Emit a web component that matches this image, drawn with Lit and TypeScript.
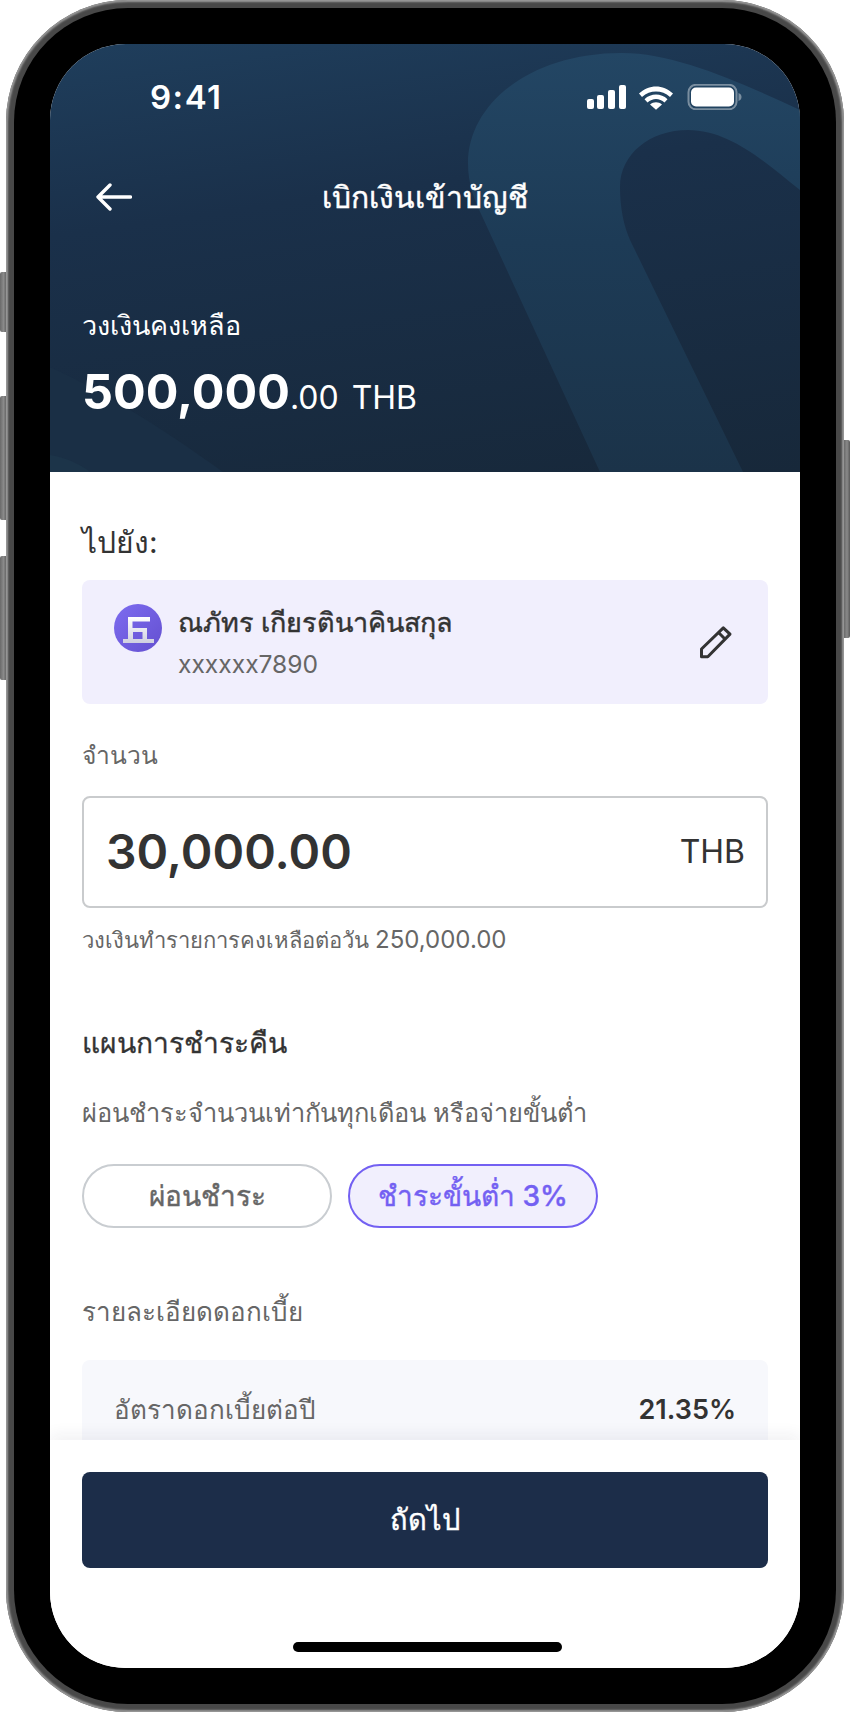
import { LitElement, html, css, svg } from "lit";
import { customElement } from "lit/decorators.js";

@customElement("app-root")
export class AppRoot extends LitElement {
  static styles = css`
    :host { display: block; width: 850px; height: 1712px; position: relative; overflow: hidden; background: #fff;
      font-family: Inter, "Noto Sans", "DejaVu Sans", sans-serif; color: #333; }
    * { box-sizing: border-box; }
    .hw { position: absolute; background: linear-gradient(90deg, #6a6a6a, #8a8a8a 50%, #5a5a5a); }
    .hw.l { left: 0; width: 7px; border-radius: 2px 0 0 2px; }
    .hw.r { right: 0; width: 6px; top: 440px; height: 198px; border-radius: 0 2px 2px 0; }
    .hw.a { top: 272px; height: 60px; }
    .hw.b { top: 396px; height: 124px; }
    .hw.c { top: 556px; height: 124px; }
    .device { position: absolute; left: 6px; top: 0; width: 838px; height: 1712px; border-radius: 122px;
      background: #484848; box-shadow: inset 0 0 2px 2px #9a9a9a; padding: 8px; }
    .bezel { width: 100%; height: 100%; background: #000; border-radius: 114px; padding: 36px; }
    .screen { width: 750px; height: 1624px; border-radius: 76px; overflow: hidden; background: #fff;
      display: flex; flex-direction: column; position: relative; }
    .header { height: 428px; flex: none; position: relative; color: #fff; overflow: hidden;
      background: linear-gradient(172deg, #1f3e5c 0%, #1a304a 36%, #17283a 100%); }
    .art { position: absolute; inset: 0; width: 750px; height: 428px; }
    .head-in { position: relative; display: flex; flex-direction: column; }
    .status { height: 106px; display: flex; align-items: center; justify-content: space-between; padding: 0 58px 0 100px; }
    .time { font-size: 33px; font-weight: 600; line-height: 40px; letter-spacing: 1.500px; }
    .sicons { display: flex; align-items: center; }
    .nav { height: 94px; display: flex; align-items: center; justify-content: center; position: relative; }
    .back { position: absolute; left: 46px; top: 33px; width: 36px; height: 28px; }
    .title { font-size: 30px; font-weight: 500; line-height: 40px; -webkit-text-stroke: 0.4px #fff; }
    .bal-label { font-size: 27px; line-height: 36px; margin: 64px 0 0 32px; }
    .bal { margin: 18px 0 0 32px; line-height: 60px; font-size: 32px; font-weight: 400; display: flex; align-items: baseline; }
    .bal b { font-size: 48.5px; font-weight: 700; }
    .bal .thb { margin-left: 13px; }
    .body { flex: 1; overflow: hidden; padding: 50px 32px 0; display: flex; flex-direction: column; }
    .h-to { font-size: 30px; line-height: 40px; color: #333; }
    .acct { margin-top: 18px; height: 124px; flex: none; background: #f1effd; border-radius: 8px; display: flex; align-items: center; padding: 0 34px 0 32px; }
    .avatar { width: 48px; height: 48px; margin-top: -29px; flex: none; }
    .acct-t { flex: 1; margin-left: 16px; padding-top: 2px; }
    .name { font-size: 27px; line-height: 36px; font-weight: 500; color: #333; -webkit-text-stroke: 0.45px #333; }
    .num { font-size: 24.600px; line-height: 36px; color: #666; margin-top: 5px; }
    .label { font-size: 24.600px; line-height: 36px; color: #666; margin-top: 33px; }
    .input { margin-top: 23px; height: 112px; flex: none; border: 2px solid #c9cbcd; border-radius: 8px; display: flex; align-items: center; justify-content: space-between; padding: 0 21px 0 22px; }
    .val { font-size: 48px; font-weight: 600; color: #333; line-height: 60px; }
    .cur { font-size: 32px; color: #333; font-weight: 400; line-height: 40px; }
    .hint { font-size: 24px; line-height: 34px; color: #666; margin-top: 15px; display: flex; align-items: baseline; }
    .hint .th { font-size: 22px; margin-right: 6px; }
    .h-plan { font-size: 28.200px; line-height: 40px; font-weight: 400; color: #333; margin-top: 66px; -webkit-text-stroke: 0.3px #333; }
    .sub { font-size: 25.400px; line-height: 36px; color: #666; margin-top: 32px; }
    .pills { display: flex; gap: 16px; margin-top: 33px; flex: none; }
    .pill { width: 250px; height: 64px; border-radius: 32px; border: 2px solid #c9cdd1; display: flex; align-items: center; justify-content: center; font-size: 28px; font-weight: 500; color: #666; background: #fff; -webkit-text-stroke: 0.4px #666; }
    .pill.on { border-color: #7360f2; color: #7360f2; background: #f1effd; -webkit-text-stroke: 0.4px #7360f2; }
    .h-det { font-size: 26px; line-height: 36px; color: #666; margin-top: 66px; }
    .det { margin-top: 30px; background: #f7f8fc; border-radius: 8px 8px 0 0; padding: 32px; flex: none; display: flex; justify-content: space-between; align-items: center; }
    .det span { font-size: 26px; line-height: 36px; color: #666; }
    .det b { font-size: 27px; line-height: 36px; font-weight: 600; color: #333; }
    .footer { height: 228px; flex: none; background: #fff; position: relative; padding: 32px 32px 0; box-shadow: 0 -6px 14px rgba(40, 40, 70, 0.06); }
    .cta { height: 96px; background: #1c2d49; border-radius: 8px; color: #fff; font-size: 29px; font-weight: 500; -webkit-text-stroke: 0.4px #fff; display: flex; align-items: center; justify-content: center; }
    .home { position: absolute; left: 243px; bottom: 16px; width: 269px; height: 10px; border-radius: 5px; background: #000; }
  `;

  private art() {
    return svg`
      <defs>
        <linearGradient id="sw" x1="0" y1="0" x2="0" y2="1">
          <stop offset="0" stop-color="#234664"/><stop offset=".45" stop-color="#1d3b56"/><stop offset="1" stop-color="#1b3349"/>
        </linearGradient>
      </defs>
      <path d="M550 428 L432 172 C424 155 418 140 418 119 C418 60 480 9 572 9 C625 9 690 38 750 66 L750 146 C715 118 680 86 638 86 C600 86 570 110 570 143 C570 165 574 182 580 196 L693 428 Z" fill="url(#sw)"/>
      <path d="M0 323 C60 350 120 390 173 428 L0 428 Z" fill="#1a2f45" />
      <path d="M0 411 C15 413 30 420 40 428 L0 428 Z" fill="#1c3449" />
    `;
  }

  render() {
    return html`
      <div class="hw l a"></div><div class="hw l b"></div><div class="hw l c"></div><div class="hw r"></div>
      <div class="device"><div class="bezel"><div class="screen">
        <div class="header">
          <svg class="art" viewBox="0 0 750 428">${this.art()}</svg>
          <div class="head-in">
            <div class="status">
              <span class="time">9:41</span>
              <div class="sicons">
                <svg width="155" height="26" viewBox="0 0 155 26">
                  <rect x="0" y="15" width="7" height="10" rx="2" fill="#fff"/>
                  <rect x="10" y="11" width="7" height="14" rx="2" fill="#fff"/>
                  <rect x="21" y="6" width="7" height="19" rx="2" fill="#fff"/>
                  <rect x="32" y="1" width="7" height="24" rx="2" fill="#fff"/>
                  <path d="M52 9.500 C62 0 76 0 86 9.500 L83 13 C75 5.800 63 5.800 55 13 Z" fill="#fff"/>
                  <path d="M57.500 15.200 C64 9 74 9 80.500 15.200 L77.500 18.500 C72.500 13.800 65.500 13.800 60.500 18.500 Z" fill="#fff"/>
                  <path d="M63 20.500 C66.500 17.600 71.500 17.600 75 20.500 L69 25.800 Z" fill="#fff"/>
                  <rect x="101.500" y="0.800" width="48" height="24.500" rx="7.500" fill="none" stroke="#fff" stroke-opacity=".4" stroke-width="2"/>
                  <rect x="104" y="3.500" width="43" height="19" rx="5" fill="#fff"/>
                  <path d="M151.500 9 C153.500 9.700 154.500 11 154.500 13 C154.500 15 153.500 16.300 151.500 17 Z" fill="#fff" fill-opacity=".4"/>
                </svg>
              </div>
            </div>
            <div class="nav">
              <svg class="back" viewBox="0 0 36 28" fill="none" stroke="#fff" stroke-width="3.400" stroke-linecap="round" stroke-linejoin="round">
                <path d="M34.500 14 H2 M14 2 L2 14 L14 26"/>
              </svg>
              <span class="title">เบิกเงินเข้าบัญชี</span>
            </div>
            <div class="bal-label">วงเงินคงเหลือ</div>
            <div class="bal"><b>500,000</b><span>.00</span><span class="thb">THB</span></div>
          </div>
        </div>
        <div class="body">
          <div class="h-to">ไปยัง:</div>
          <div class="acct">
            <svg class="avatar" viewBox="0 0 48 48">
              <defs>
                <linearGradient id="av" x1="0" y1="0" x2="1" y2="1"><stop offset="0" stop-color="#7d6cf0"/><stop offset="1" stop-color="#6450d0"/></linearGradient>
                <linearGradient id="lg" x1="0" y1="0" x2="0" y2="1"><stop offset="0" stop-color="#fff"/><stop offset="1" stop-color="#cfcfe0"/></linearGradient>
              </defs>
              <circle cx="24" cy="24" r="24" fill="url(#av)"/>
              <path d="M14 13 H36 V17.500 H18.500 V24 H33 V35 H40 V39 H9 V35 H14 V13 Z M19 28 V35 H28.500 V28 Z" fill="url(#lg)" fill-rule="evenodd"/>
            </svg>
            <div class="acct-t">
              <div class="name">ณภัทร เกียรตินาคินสกุล</div>
              <div class="num">xxxxxx7890</div>
            </div>
            <svg width="36" height="36" viewBox="0 0 36 36" fill="none" stroke="#333" stroke-width="3" stroke-linejoin="round">
              <path d="M3.500 32.800 L3.500 25 L25.300 3.800 L32 10.100 L9.800 32.800 Z M20.500 8.500 L27 15"/>
            </svg>
          </div>
          <div class="label">จำนวน</div>
          <div class="input"><span class="val">30,000.00</span><span class="cur">THB</span></div>
          <div class="hint"><span class="th">วงเงินทำรายการคงเหลือต่อวัน</span><span>250,000.00</span></div>
          <div class="h-plan">แผนการชำระคืน</div>
          <div class="sub">ผ่อนชำระจำนวนเท่ากันทุกเดือน หรือจ่ายขั้นต่ำ</div>
          <div class="pills"><div class="pill">ผ่อนชำระ</div><div class="pill on">ชำระขั้นต่ำ 3%</div></div>
          <div class="h-det">รายละเอียดดอกเบี้ย</div>
          <div class="det"><span>อัตราดอกเบี้ยต่อปี</span><b>21.35%</b></div>
        </div>
        <div class="footer">
          <div class="cta">ถัดไป</div>
          <div class="home"></div>
        </div>
      </div></div></div>
    `;
  }
}
